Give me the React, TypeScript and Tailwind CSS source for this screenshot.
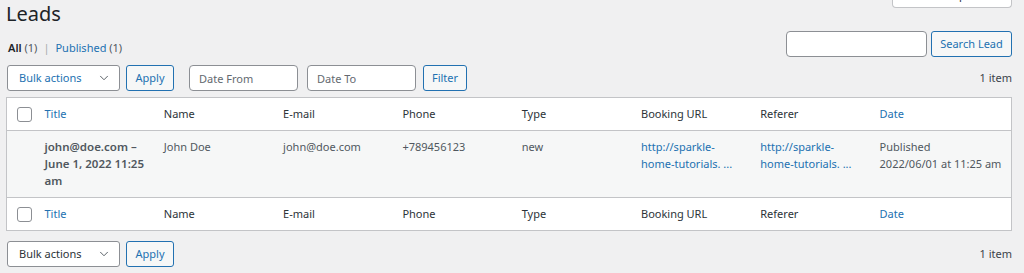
import React from 'react';
import { ChevronDown } from 'lucide-react';

const font = { fontFamily: '"Noto Sans", "Open Sans", sans-serif' };

const columns = ['Name', 'E-mail', 'Phone', 'Type', 'Booking URL', 'Referer'];

function Checkbox() {
  return <span className="block w-[15px] h-[15px] rounded-[3px] border border-[#8c8f94] bg-white" />;
}

function BulkActions({ active }: { active?: boolean }) {
  return (
    <div className="flex items-center gap-[6px]">
      <div className="flex items-center justify-between w-[113px] h-[26px] pl-[11px] pr-[8px] rounded-[3px] border border-[#8c8f94] bg-white">
        <span className={active ? 'text-[#2271b1]' : 'text-[#2c3338]'}>Bulk actions</span>
        <ChevronDown size={14} strokeWidth={1.6} className="text-[#50575e]" />
      </div>
      <button className="h-[26px] w-[48px] rounded-[3px] border border-[#2271b1] bg-[#f6f7f7] text-[#2271b1]">
        Apply
      </button>
    </div>
  );
}

function HeaderRow({ top }: { top?: boolean }) {
  return (
    <tr className={top ? 'border-b border-[#c3c4c7]' : 'border-t border-[#c3c4c7]'}>
      <td className="h-[33px] pl-[10px] align-middle">
        <Checkbox />
      </td>
      <td className="pl-[8px] text-[#2271b1]">Title</td>
      {columns.map(c => (
        <td key={c} className="pl-[8px] text-[#2c3338]">{c}</td>
      ))}
      <td className="pl-[8px] text-[#2271b1]">Date</td>
    </tr>
  );
}

export default function App() {
  return (
    <div className="min-h-[273px] bg-[#f0f0f1] pl-[6px] pr-[12px] text-[11px] text-[#3c434a] overflow-hidden" style={font}>
      {/* Header */}
      <div className="flex items-start justify-between">
        <h1 className="text-[20px] leading-[26px] text-[#1d2327] pt-[1px]">Leads</h1>
        <div className="mt-[-17px] w-[120px] h-[25px] rounded-b-[4px] border border-[#c3c4c7] border-t-0 bg-white flex items-center justify-center text-[#2c3338]">
          Screen Options
        </div>
      </div>

      {/* Views + search */}
      <div className="flex items-end justify-between mt-[4px]">
        <div className="pb-[1px] pl-[2px] text-[#50575e]">
          <span className="font-semibold text-[#1d2327]">All</span> <span>(1)</span>
          <span className="mx-[6px] text-[#a7aaad]">|</span>
          <span className="text-[#2271b1]">Published</span> <span>(1)</span>
        </div>
        <div className="flex items-center gap-[4px]">
          <input className="w-[141px] h-[26px] rounded-[4px] border border-[#8c8f94] bg-white" />
          <button className="w-[81px] h-[26px] rounded-[3px] border border-[#2271b1] bg-[#f6f7f7] text-[#2271b1]">
            Search Lead
          </button>
        </div>
      </div>

      {/* Top tablenav */}
      <div className="flex items-center justify-between mt-[8px] pl-[1px]">
        <div className="flex items-center">
          <BulkActions active />
          <input placeholder="Date From" className="ml-[15px] w-[109px] h-[26px] px-[9px] rounded-[4px] border border-[#8c8f94] bg-white placeholder:text-[#646970]" />
          <input placeholder="Date To" className="ml-[9px] w-[109px] h-[26px] px-[9px] rounded-[4px] border border-[#8c8f94] bg-white placeholder:text-[#646970]" />
          <button className="ml-[7px] w-[44px] h-[26px] rounded-[3px] border border-[#2271b1] bg-[#f6f7f7] text-[#2271b1]">
            Filter
          </button>
        </div>
        <span className="text-[#3c434a]">1 item</span>
      </div>

      {/* Table */}
      <table className="mt-[6px] w-full table-fixed border-collapse border border-[#c3c4c7] bg-white">
        <colgroup>
          <col className="w-[30px]" />
          {[0, 1, 2, 3, 4, 5, 6].map(i => <col key={i} className="w-[119.3px]" />)}
          <col />
        </colgroup>
        <thead>
          <HeaderRow top />
        </thead>
        <tbody>
          <tr className="bg-[#f6f7f7] align-top leading-[17px] text-[#50575e]">
            <td className="h-[67px]" />
            <td className="pl-[8px] pt-[7px] pr-[4px] font-semibold text-[11.5px] text-[#50575e]">
              john@doe.com – June 1, 2022 11:25 am
            </td>
            <td className="pl-[8px] pt-[7px]">John Doe</td>
            <td className="pl-[8px] pt-[7px]">john@doe.com</td>
            <td className="pl-[8px] pt-[7px]">+789456123</td>
            <td className="pl-[8px] pt-[7px]">new</td>
            <td className="pl-[8px] pt-[7px] text-[#2271b1]">http://sparkle-<br />home-tutorials. ...</td>
            <td className="pl-[8px] pt-[7px] text-[#2271b1]">http://sparkle-<br />home-tutorials. ...</td>
            <td className="pl-[8px] pt-[7px]">Published<br />2022/06/01 at 11:25 am</td>
          </tr>
        </tbody>
        <tfoot>
          <HeaderRow />
        </tfoot>
      </table>

      {/* Bottom tablenav */}
      <div className="flex items-center justify-between mt-[10px] pl-[1px]">
        <BulkActions />
        <span className="text-[#3c434a]">1 item</span>
      </div>
    </div>
  );
}
